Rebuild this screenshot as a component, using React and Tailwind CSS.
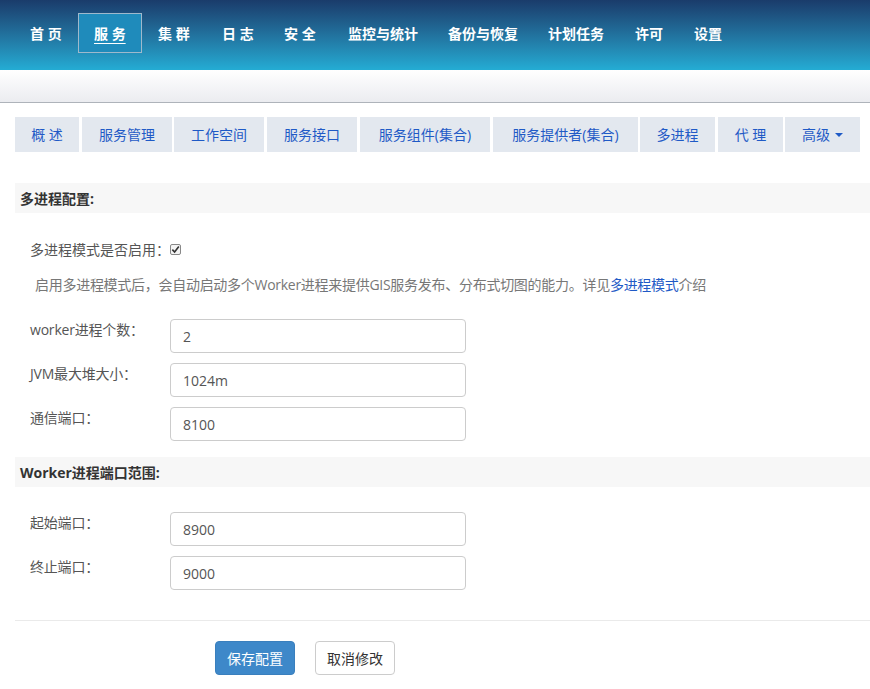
import React from "react";

const navItems = [
  ["首 页", "w-[64px]"],
  ["服 务", "w-[64px]"],
  ["集 群", "w-[64px]"],
  ["日 志", "w-[62px]"],
  ["安 全", "w-[64px]"],
  ["监控与统计", "w-[100px]"],
  ["备份与恢复", "w-[100px]"],
  ["计划任务", "w-[87px]"],
  ["许可", "w-[59px]"],
  ["设置", "w-[60px]"],
];
const tabs = [
  ["概 述", "w-[64px]", ""],
  ["服务管理", "w-[90px]", "ml-[3px]"],
  ["工作空间", "w-[90px]", "ml-[2px]"],
  ["服务接口", "w-[90px]", "ml-[3px]"],
  ["服务组件(集合)", "w-[130px]", "ml-[3px]"],
  ["服务提供者(集合)", "w-[145px]", "ml-[3px]"],
  ["多进程", "w-[75px]", "ml-[2px]"],
  ["代 理", "w-[65px]", "ml-[3px]"],
];

function Field({ label, value }) {
  return (
    <div className="flex items-start h-[34px]">
      <div className="w-[170px] pl-[30px] pt-[1px] text-[14px] text-[#555] leading-[20px] whitespace-nowrap tracking-[-0.2px]">{label}</div>
      <div className="w-[296px] h-[34px] border border-[#ccc] rounded-[4px] bg-white flex items-center pl-[12px] text-[14px] text-[#555]">
        {value}
      </div>
    </div>
  );
}

export default function App() {
  return (
    <div className="w-[870px] h-[689px] bg-white overflow-hidden" style={{ fontFamily: '"Open Sans", "Noto Sans CJK SC", sans-serif' }}>
      <div className="h-[70px] bg-gradient-to-b from-[#1a3c6b] to-[#24acd4] flex items-start pl-[14px] pt-[13px]">
        {navItems.map(([t, w], i) => (
          <div
            key={t}
            className={
              "h-[40px] flex items-center pl-[15px] text-[14px] font-bold text-white whitespace-nowrap " +
              w +
              (i === 1 ? " border border-[#9fb9cc] bg-[#1f8bbb] underline underline-offset-[4px]" : " border border-transparent")
            }
          >
            {t}
          </div>
        ))}
      </div>
      <div className="h-[33px] bg-gradient-to-b from-white to-[#ebecf0] border-b border-[#aeb3ba]"></div>
      <div className="flex items-center pl-[15px] mt-[14px]">
        {tabs.map(([t, w, m]) => (
          <div key={t} className={"h-[35px] flex items-center justify-center bg-[#e3e8ef] text-[14px] text-[#1f5ac6] whitespace-nowrap " + w + " " + m}>
            {t}
          </div>
        ))}
        <div className="ml-[2px] h-[35px] w-[75px] flex items-center justify-center bg-[#e3e8ef] text-[14px] text-[#1f5ac6] gap-[5px]">
          高级
          <span className="inline-block w-0 h-0 border-l-[4px] border-r-[4px] border-t-[4px] border-l-transparent border-r-transparent border-t-[#1f5ac6]"></span>
        </div>
      </div>

      <div className="ml-[15px] mt-[31px] h-[30px] bg-[#f7f7f7] flex items-center pl-[5px] text-[14px] font-bold text-[#333]">多进程配置:</div>

      <div className="pl-[30px] mt-[26px] flex items-center h-[20px] text-[14px] text-[#555]">
        <span className="w-[140px] whitespace-nowrap">多进程模式是否启用：</span>
        <span className="w-[11px] h-[11px] border border-[#888] rounded-[2px] bg-[#f4f4f4] flex items-center justify-center">
          <svg width="9" height="9" viewBox="0 0 10 10"><path d="M1.5 5.2 L4 7.8 L8.7 1.8" stroke="#333" strokeWidth="1.8" fill="none" /></svg>
        </span>
      </div>
      <div className="pl-[35px] mt-[16px] h-[20px] text-[14px] text-[#777] whitespace-nowrap leading-[20px] tracking-[-0.28px]">
        启用多进程模式后，会自动启动多个Worker进程来提供GIS服务发布、分布式切图的能力。详见<span className="text-[#1f5ac6]">多进程模式</span>介绍
      </div>

      <div className="mt-[24px] flex flex-col gap-[10px]">
        <Field label="worker进程个数：" value="2" />
        <Field label="JVM最大堆大小：" value="1024m" />
        <Field label="通信端口：" value="8100" />
      </div>

      <div className="ml-[15px] mt-[16px] h-[30px] bg-[#f7f7f7] flex items-center pl-[5px] text-[14px] font-bold text-[#333]">Worker进程端口范围:</div>

      <div className="mt-[25px] flex flex-col gap-[10px]">
        <Field label="起始端口：" value="8900" />
        <Field label="终止端口：" value="9000" />
      </div>

      <div className="ml-[15px] mt-[30px] border-t border-[#eaeaea]"></div>

      <div className="flex mt-[20px] pl-[215px] gap-[20px]">
        <div className="w-[80px] h-[34px] rounded-[4px] bg-[#3e88c9] border border-[#3a7fbd] text-white text-[14px] flex items-center justify-center">保存配置</div>
        <div className="w-[80px] h-[34px] rounded-[4px] bg-white border border-[#ccc] text-[#333] text-[14px] flex items-center justify-center">取消修改</div>
      </div>
    </div>
  );
}
